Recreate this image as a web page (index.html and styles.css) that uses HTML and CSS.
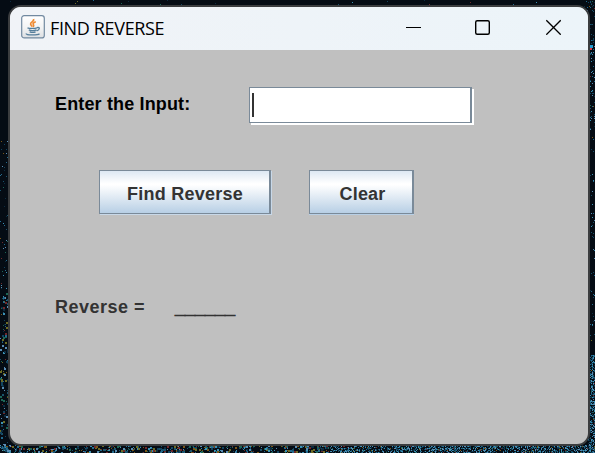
FILE: index.html
```
<!DOCTYPE html>
<html lang="en">
<head>
<meta charset="utf-8">
<title>FIND REVERSE</title>
<link rel="stylesheet" href="styles.css">
</head>
<body>
<canvas class="wallpaper" width="595" height="453"></canvas>
<main class="window">
  <header class="titlebar">
    <svg class="java" width="24" height="24" viewBox="0 0 24 24" fill="none">
      <defs><linearGradient id="tile" x2="0" y2="1"><stop offset="0" stop-color="#fff"/><stop offset=".55" stop-color="#f2f3f4"/><stop offset="1" stop-color="#dcdfe2"/></linearGradient></defs>
      <rect x=".7" y=".7" width="22.6" height="22.2" rx="2.5" fill="url(#tile)" stroke="#7189a0" stroke-width="1.2"/>
      <path d="M12.600 4c1 2.600-3.500 3-3 5.200.2 1 1.200 1.600 1.700 2.500M14.800 6.800c-2.300.8-3.400 1.700-2.300 3.100.5.700.2 1.300-.5 1.900" stroke="#ee8a32" stroke-width="1.700"/>
      <path d="M6.500 12.800c2 .9 7.500.8 9.500 0M7.800 14.800c2 .9 5.700.8 7.700 0M8.600 16.800c1.800.7 4.400.7 6 0M16 12.700c3.300-1 3 2.200-.3 3.100M5.500 18.500c-1.800 1.700 11 2.100 13 .2" stroke="#557e9b" stroke-width="1.300"/>
    </svg>
    <h1 class="title">FIND REVERSE</h1>
    <div class="controls">
      <svg width="16" height="16" viewBox="0 0 16 16"><path d="M1 8.500h15" stroke="#000"/></svg>
      <svg width="16" height="16" viewBox="0 0 16 16"><rect x="1.700" y="1.700" width="13.600" height="13.600" rx="1.500" fill="none" stroke="#000" stroke-width="1.400"/></svg>
      <svg width="16" height="16" viewBox="0 0 16 16"><path d="M1.300 1.300l14.400 14.400M15.700 1.300L1.300 15.700" stroke="#000" stroke-width="1.300"/></svg>
    </div>
  </header>
  <section class="content">
    <div class="row input-row">
      <span class="label prompt">Enter the Input:</span>
      <div class="field"><span class="caret"></span></div>
    </div>
    <div class="row actions">
      <button class="button find">Find Reverse</button>
      <button class="button clear">Clear</button>
    </div>
    <div class="row result">
      <span class="label equals">Reverse =</span>
      <span class="label blank">______</span>
    </div>
  </section>
</main>
<script src="wallpaper.js"></script>
</body>
</html>
```
FILE: styles.css
```
* { box-sizing: border-box; }
body {
  margin: 0;
  width: 595px;
  height: 453px;
  overflow: hidden;
  background: #050c14;
  font-family: "Liberation Sans", Arial, sans-serif;
}
.wallpaper { position: absolute; top: 0; left: 0; }
.window {
  position: relative;
  width: 582px;
  height: 441px;
  margin: 5px 0 0 8px;
  border: 2px solid #3b3d3f;
  border-radius: 13px;
  background: #c0c0c0;
  overflow: hidden;
}
.titlebar {
  display: flex;
  align-items: center;
  height: 43px;
  padding: 0 27px 0 11px;
  background: linear-gradient(90deg, #f0f3f7, #ecf4f9);
}
.java { margin-top: -4px; }
.title {
  margin: -2px 0 0 5px;
  font: 400 18px/24px "Open Sans", "Noto Sans", sans-serif;
  letter-spacing: -0.35px;
  color: #000;
  white-space: nowrap;
}
.controls { display: flex; gap: 54px; margin: -3px 0 0 auto; }
.controls svg:nth-child(2) { margin: 0 1px 0 -1px; }
.content { padding: 37px 0 0 45px; }
.row { display: flex; }
.label, .button {
  font-family: inherit;
  font-size: 18px;
  font-weight: 700;
  line-height: 22px;
  letter-spacing: 0.2px;
  color: #333;
  white-space: nowrap;
}
.input-row { height: 38px; }
.prompt { width: 194px; padding-top: 6px; color: #000; letter-spacing: 0.15px; }
.field {
  width: 223px;
  height: 36px;
  padding: 5px 0 0 2px;
  border: 1px solid #7a8a99;
  border-right-width: 2px;
  background: #fff;
  box-shadow: 2px 2px 0 #fff;
}
.caret { display: block; width: 2px; height: 24px; background: #333; }
.actions { gap: 38px; margin: 45px 0 0 44px; }
.button {
  height: 44px;
  padding: 3px 0 0;
  border: 1px solid #7a8a99;
  border-right-width: 2px;
  border-radius: 0;
  background: linear-gradient(#dde8f3, #fff 30%, #fff 33%, #b8cfe5);
  box-shadow: 0 1px 0 #b8cfe5;
}
.find { width: 172px; padding-left: 1px; letter-spacing: 0.25px; box-shadow: 1px 1px 0 #c8d8e8; }
.clear { width: 105px; padding-left: 3px; }
.result { margin-top: 82px; }
.equals { width: 120px; letter-spacing: 0.5px; }
.blank { padding-top: 1px; letter-spacing: 0; -webkit-text-stroke: 0.9px #333; }
```
FILE: wallpaper.js
```
const canvas = document.querySelector(".wallpaper");
const ctx = canvas.getContext("2d");
let seed = 4217;
const rand = () => (seed = (seed * 16807) % 2147483647) / 2147483647;
const cool = ["#12445f", "#236b8e", "#3b91b5", "#0c2c40", "#5a8db4", "#1a526b"];
const warm = ["#7a5516", "#70282a", "#6c6b26", "#1d6656"];

function speckle(x, y, w, h, density, warmth, maxSize) {
  const count = w * h * density;
  for (let i = 0; i < count; i++) {
    const palette = rand() < warmth ? warm : cool;
    ctx.fillStyle = palette[Math.floor(rand() * palette.length)];
    const size = 1 + Math.floor(rand() * maxSize);
    ctx.fillRect(x + Math.floor(rand() * w), y + Math.floor(rand() * h), size, size);
  }
}

speckle(0, 0, 595, 5, 0.006, 0.3, 1);
speckle(0, 140, 8, 150, 0.04, 0.3, 1);
speckle(0, 290, 8, 163, 0.1, 0.4, 2);
speckle(584, 0, 11, 130, 0.13, 0.05, 1);
speckle(590, 130, 5, 220, 0.04, 0.1, 1);
speckle(588, 355, 7, 98, 0.75, 0.04, 1);
speckle(0, 445, 330, 8, 0.22, 0.35, 2);
speckle(330, 445, 265, 8, 0.75, 0.09, 1);
ctx.fillStyle = "#249bd0";
ctx.fillRect(590, 45, 3, 3);
ctx.fillStyle = "#d73a43";
ctx.fillRect(590, 48, 2, 2);
```
